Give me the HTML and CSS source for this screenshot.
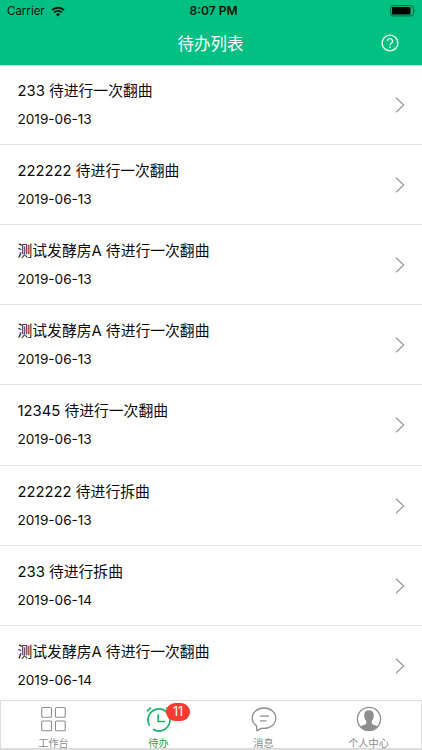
FILE: index.html
```html
<!DOCTYPE html>
<html lang="zh-CN">
<head>
    <meta charset="UTF-8">
    <meta name="viewport" content="width=device-width, initial-scale=1.0">
    <title>待办列表</title>
    <link rel="stylesheet" href="styles.css">
</head>
<body>
    <header>
        <div class="status-bar">
            <div class="carrier">
                <span>Carrier</span>
                <svg class="wifi" viewBox="0 0 14 11" width="14" height="11">
                    <path d="M1 4.1a8.8 8.8 0 0 1 12 0M3.2 6.4a5.6 5.6 0 0 1 7.6 0" fill="none" stroke="#06130d" stroke-width="1.9"/>
                    <path d="M4.9 8.2a3.2 3.2 0 0 1 4.2 0L7 10.4z" fill="#06130d"/>
                </svg>
            </div>
            <div class="time">8:07 PM</div>
            <svg class="battery" viewBox="0 0 27 12" width="27" height="12">
                <rect x="0.6" y="0.6" width="22.8" height="10.3" rx="2.4" fill="none" stroke="#06643f"/>
                <rect x="2" y="2" width="18.5" height="7.5" rx="0.8" fill="#000"/>
                <path d="M24.8 4q1.6 1.8 0 3.6z" fill="#06643f"/>
            </svg>
        </div>
        <div class="nav-bar">
            <h1>待办列表</h1>
            <svg class="help" viewBox="0 0 18 18" width="18" height="18">
                <circle cx="9" cy="9" r="7.9" fill="none" stroke="#e8fff6" stroke-width="1.4"/>
                <path d="M6.5 7.2a2.5 2.5 0 1 1 3.7 2.1Q9 9.9 9 11.2" fill="none" stroke="#e8fff6" stroke-width="1.3"/>
                <circle cx="9" cy="13.2" r="0.9" fill="#e8fff6"/>
            </svg>
        </div>
    </header>

    <main id="todoList"></main>

    <nav class="tab-bar">
        <a class="tab">
            <svg viewBox="0 0 28 28" width="28" height="28">
                <g fill="none" stroke="#8e8e8e" stroke-width="1.1">
                    <rect x="1.7" y="2.5" width="9.8" height="9.8" rx="1"/>
                    <rect x="15.4" y="2.5" width="9.8" height="9.8" rx="1"/>
                    <rect x="1.7" y="16" width="9.8" height="9.8" rx="1"/>
                    <rect x="15.4" y="16" width="9.8" height="9.8" rx="1"/>
                </g>
            </svg>
            <span>工作台</span>
        </a>
        <a class="tab active">
            <svg viewBox="0 0 28 28" width="28" height="28">
                <g fill="none" stroke="#1db368" stroke-width="1.7">
                    <path d="M8 24.2A11 11 0 1 0 4.6 20.7"/>
                    <path d="M13.2 9.2v7.3h7M1.9 6.4l4-3.7M21.2 2.7l4 3.7"/>
                </g>
            </svg>
            <span>待办</span>
            <b class="badge">11</b>
        </a>
        <a class="tab">
            <svg viewBox="0 0 28 28" width="28" height="28">
                <g fill="none" stroke="#8e8e8e" stroke-width="1.3" stroke-linejoin="round">
                    <path d="M6.4 20.6C3.7 18.8 2.2 16.2 2.2 13.2 2.2 7.5 7.3 3 14 3s11.8 4.5 11.8 10.2S20.7 23.3 14 23.3q-1.3 0-2.5-.2L6.9 25.9z"/>
                    <path d="M10 11.2h9M10 15.8h6.5"/>
                </g>
            </svg>
            <span>消息</span>
        </a>
        <a class="tab">
            <svg viewBox="0 0 28 28" width="28" height="28">
                <circle cx="14" cy="14" r="11.6" fill="none" stroke="#8e8e8e" stroke-width="1.3"/>
                <path d="M14 5.3c3.2 0 5 2.1 4.8 5.2-.1 2.5-.8 4.3-2 5.6v2.3c1 1.5 4.3 1.6 6.2 3.3A11.5 11.5 0 0 1 5 21.7c1.9-1.7 5.2-1.8 6.2-3.3v-2.3c-1.2-1.3-1.9-3.1-2-5.6-.2-3.1 1.6-5.2 4.8-5.2z" fill="#8e8e8e"/>
            </svg>
            <span>个人中心</span>
        </a>
    </nav>

    <script>
        const todos = [
            ['233 待进行一次翻曲', '2019-06-13'],
            ['222222 待进行一次翻曲', '2019-06-13'],
            ['测试发酵房A 待进行一次翻曲', '2019-06-13'],
            ['测试发酵房A 待进行一次翻曲', '2019-06-13'],
            ['12345 待进行一次翻曲', '2019-06-13'],
            ['222222 待进行拆曲', '2019-06-13'],
            ['233 待进行拆曲', '2019-06-14'],
            ['测试发酵房A 待进行一次翻曲', '2019-06-14']
        ];

        document.getElementById('todoList').innerHTML = todos.map(([title, date]) => `
            <div class="todo">
                <div>
                    <div class="title">${title}</div>
                    <div class="date">${date}</div>
                </div>
                <svg viewBox="0 0 10 16" width="10" height="16">
                    <path d="M1 .8l7.7 7.2L1 15.2" fill="none" stroke="#999" stroke-width="1.2"/>
                </svg>
            </div>`).join('');
    </script>
</body>
</html>
```
FILE: styles.css
```css
* {
    box-sizing: border-box;
}
body {
    font-family: Inter, "Noto Sans CJK SC", sans-serif;
    margin: 0;
    height: 750px;
    display: flex;
    flex-direction: column;
    overflow: hidden;
    background: white;
    color: #0a0a0a;
}
header {
    flex: none;
    height: 66px;
    background-color: #02bf82;
    border-bottom: 1px solid #b5ebd8;
}
.status-bar {
    display: grid;
    grid-template-columns: 1fr auto 1fr;
    align-items: center;
    height: 22px;
    padding: 0 5px 0 7px;
    font-size: 11.5px;
    color: #06130d;
}
.carrier {
    display: flex;
    align-items: center;
    gap: 6px;
}
.time {
    font-size: 12px;
    line-height: 14px;
    font-weight: 600;
    padding-left: 3px;
}
.battery {
    justify-self: end;
}
.nav-bar {
    display: grid;
    grid-template-columns: 1fr auto 1fr;
    align-items: center;
    height: 42px;
    padding-right: 23px;
    padding-left: 22px;
}
h1 {
    grid-column: 2;
    margin: 0;
    font-size: 16.5px;
    line-height: 24px;
    padding-top: 1px;
    font-weight: 400;
    color: white;
}
.help {
    justify-self: end;
}
main {
    flex: 1;
    min-height: 0;
    margin-top: -1px;
    overflow: hidden;
}
.todo {
    display: flex;
    justify-content: space-between;
    align-items: center;
    height: 80.12px;
    padding: 1px 17px 0 17.5px;
    border-bottom: 1px solid #e2e2e2;
}
.title {
    font-size: 14.8px;
    line-height: 28px;
}
.date {
    font-size: 13.6px;
    line-height: 28px;
}
.tab-bar {
    flex: none;
    display: grid;
    grid-template-columns: repeat(4, 1fr);
    height: 50px;
    border: 1px solid #dcdcdc;
    border-bottom-width: 2px;
    background: white;
}
.tab {
    position: relative;
    display: flex;
    flex-direction: column;
    align-items: center;
    padding-top: 4px;
    font-size: 10.2px;
    line-height: 14px;
    color: #8a8a8a;
}
.tab span {
    margin-top: 3px;
}
.tab.active {
    color: #2ca33a;
}
.badge {
    position: absolute;
    top: 2px;
    left: 60px;
    width: 24px;
    height: 18px;
    border-radius: 9px;
    background: #fb3b30;
    color: white;
    font-size: 12.5px;
    font-weight: 400;
    line-height: 18px;
    text-align: center;
}
```
